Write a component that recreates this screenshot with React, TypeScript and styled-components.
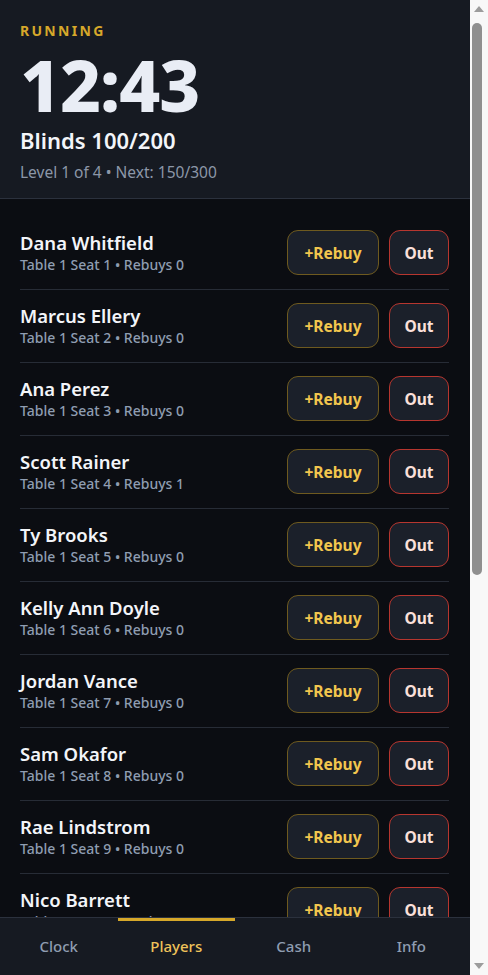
import styled, { createGlobalStyle } from 'styled-components';

const GlobalStyle = createGlobalStyle`
    html, body {
        margin: 0;
        padding: 0;
        background: #0b0d12;
    }
    body {
        font-family: "Noto Sans", "Open Sans", sans-serif;
        color: #eef1f6;
    }
    * {
        box-sizing: border-box;
    }
`;

const Shell = styled.div`
    display: flex;
    height: 100vh;
    overflow: hidden;
`;

const Viewport = styled.div`
    flex: 1;
    display: flex;
    flex-direction: column;
    min-width: 0;
    background: #0b0d12;
`;

const Content = styled.div`
    flex: 1;
    overflow: hidden;
`;

const Header = styled.header`
    background: #161a22;
    border-bottom: 1px solid #2b313d;
    padding: 20px 20px 16px;
`;

const Status = styled.div`
    font-size: 14px;
    font-weight: 700;
    letter-spacing: 2.3px;
    color: #d6a82a;
    line-height: 21px;
`;

const Timer = styled.div`
    font-size: 71px;
    font-weight: 800;
    line-height: 80px;
    color: #e9edf5;
    letter-spacing: -1px;
    margin-top: 4px;
`;

const Blinds = styled.div`
    font-size: 22px;
    font-weight: 600;
    line-height: 30px;
    color: #f3f5f9;
`;

const LevelInfo = styled.div`
    font-size: 15.5px;
    color: #8c97a8;
    margin-top: 7px;
    line-height: 20px;
`;

const List = styled.main`
    padding: 18px 21px 0 20px;
`;

const Row = styled.div`
    display: flex;
    align-items: center;
    justify-content: space-between;
    padding: 13px 0 14px;
    border-bottom: 1px solid #272c36;
`;

const PlayerInfo = styled.div`
    display: flex;
    flex-direction: column;
`;

const Name = styled.div`
    font-size: 18.5px;
    font-weight: 600;
    line-height: 24px;
    color: #f3f5f9;
`;

const Meta = styled.div`
    font-size: 14px;
    font-weight: 500;
    line-height: 20px;
    color: #8f9db1;
`;

const Actions = styled.div`
    display: flex;
    gap: 10px;
`;

const ActionButton = styled.button<{ tone: 'gold' | 'red' }>`
    height: 45px;
    padding: 0;
    width: ${(p) => (p.tone === 'gold' ? '92px' : '60px')};
    border-radius: 11px;
    background: #1b202a;
    border: 1px solid ${(p) => (p.tone === 'gold' ? '#6e5a1f' : '#b7362f')};
    color: ${(p) => (p.tone === 'gold' ? '#f2c64e' : '#fbe0da')};
    font-family: inherit;
    font-size: 15.5px;
    font-weight: 700;
    cursor: pointer;
`;

const Nav = styled.nav`
    flex: 0 0 58px;
    background: #161a22;
    border-top: 1px solid #2b313d;
    display: grid;
    grid-template-columns: repeat(4, 1fr);
`;

const Tab = styled.button<{ active?: boolean }>`
    position: relative;
    background: none;
    border: none;
    font-family: inherit;
    font-size: 15px;
    font-weight: 500;
    color: ${(p) => (p.active ? '#eec25a' : '#8f9db1')};
    padding: 0 0 2px;
    cursor: pointer;

    &::before {
        content: '';
        position: absolute;
        left: 0;
        right: 0;
        top: 0;
        height: 3px;
        background: ${(p) => (p.active ? '#d6a82a' : 'transparent')};
    }
`;

const ScrollRail = styled.div`
    flex: 0 0 18px;
    background: #f8f8f8;
    display: flex;
    flex-direction: column;
    align-items: center;
`;

const ScrollArrow = styled.div`
    height: 18px;
    width: 100%;
    display: flex;
    align-items: center;
    justify-content: center;
`;

const ScrollTrack = styled.div`
    flex: 1;
    width: 100%;
    padding: 5px 0 0 2px;
`;

const ScrollThumb = styled.div`
    width: 10px;
    height: 552px;
    border-radius: 5px;
    background: #8f8f8f;
`;

const players = [
    { name: 'Dana Whitfield', rebuys: 0 },
    { name: 'Marcus Ellery', rebuys: 0 },
    { name: 'Ana Perez', rebuys: 0 },
    { name: 'Scott Rainer', rebuys: 1 },
    { name: 'Ty Brooks', rebuys: 0 },
    { name: 'Kelly Ann Doyle', rebuys: 0 },
    { name: 'Jordan Vance', rebuys: 0 },
    { name: 'Sam Okafor', rebuys: 0 },
    { name: 'Rae Lindstrom', rebuys: 0 },
    { name: 'Nico Barrett', rebuys: 0 },
    { name: 'Priya Nair', rebuys: 0 },
    { name: 'Owen Castillo', rebuys: 0 },
];

const tabs = ['Clock', 'Players', 'Cash', 'Info'];

function Arrow({ up }: { up?: boolean }) {
    return (
        <svg width="12" height="8" viewBox="0 0 12 8">
            <polygon points={up ? '6,1 11,7 1,7' : '1,1 11,1 6,7'} fill="#9c9c9c" />
        </svg>
    );
}

function App() {
    return (
        <Shell>
            <GlobalStyle />
            <Viewport>
                <Content>
                    <Header>
                        <Status>RUNNING</Status>
                        <Timer>12:43</Timer>
                        <Blinds>Blinds 100/200</Blinds>
                        <LevelInfo>Level 1 of 4 • Next: 150/300</LevelInfo>
                    </Header>
                    <List>
                        {players.map((p, i) => (
                            <Row key={p.name}>
                                <PlayerInfo>
                                    <Name>{p.name}</Name>
                                    <Meta>
                                        Table 1 Seat {i + 1} • Rebuys {p.rebuys}
                                    </Meta>
                                </PlayerInfo>
                                <Actions>
                                    <ActionButton tone="gold">+Rebuy</ActionButton>
                                    <ActionButton tone="red">Out</ActionButton>
                                </Actions>
                            </Row>
                        ))}
                    </List>
                </Content>
                <Nav>
                    {tabs.map((t) => (
                        <Tab key={t} active={t === 'Players'}>
                            {t}
                        </Tab>
                    ))}
                </Nav>
            </Viewport>
            <ScrollRail>
                <ScrollArrow>
                    <Arrow up />
                </ScrollArrow>
                <ScrollTrack>
                    <ScrollThumb />
                </ScrollTrack>
                <ScrollArrow>
                    <Arrow />
                </ScrollArrow>
            </ScrollRail>
        </Shell>
    );
}

export default App;
